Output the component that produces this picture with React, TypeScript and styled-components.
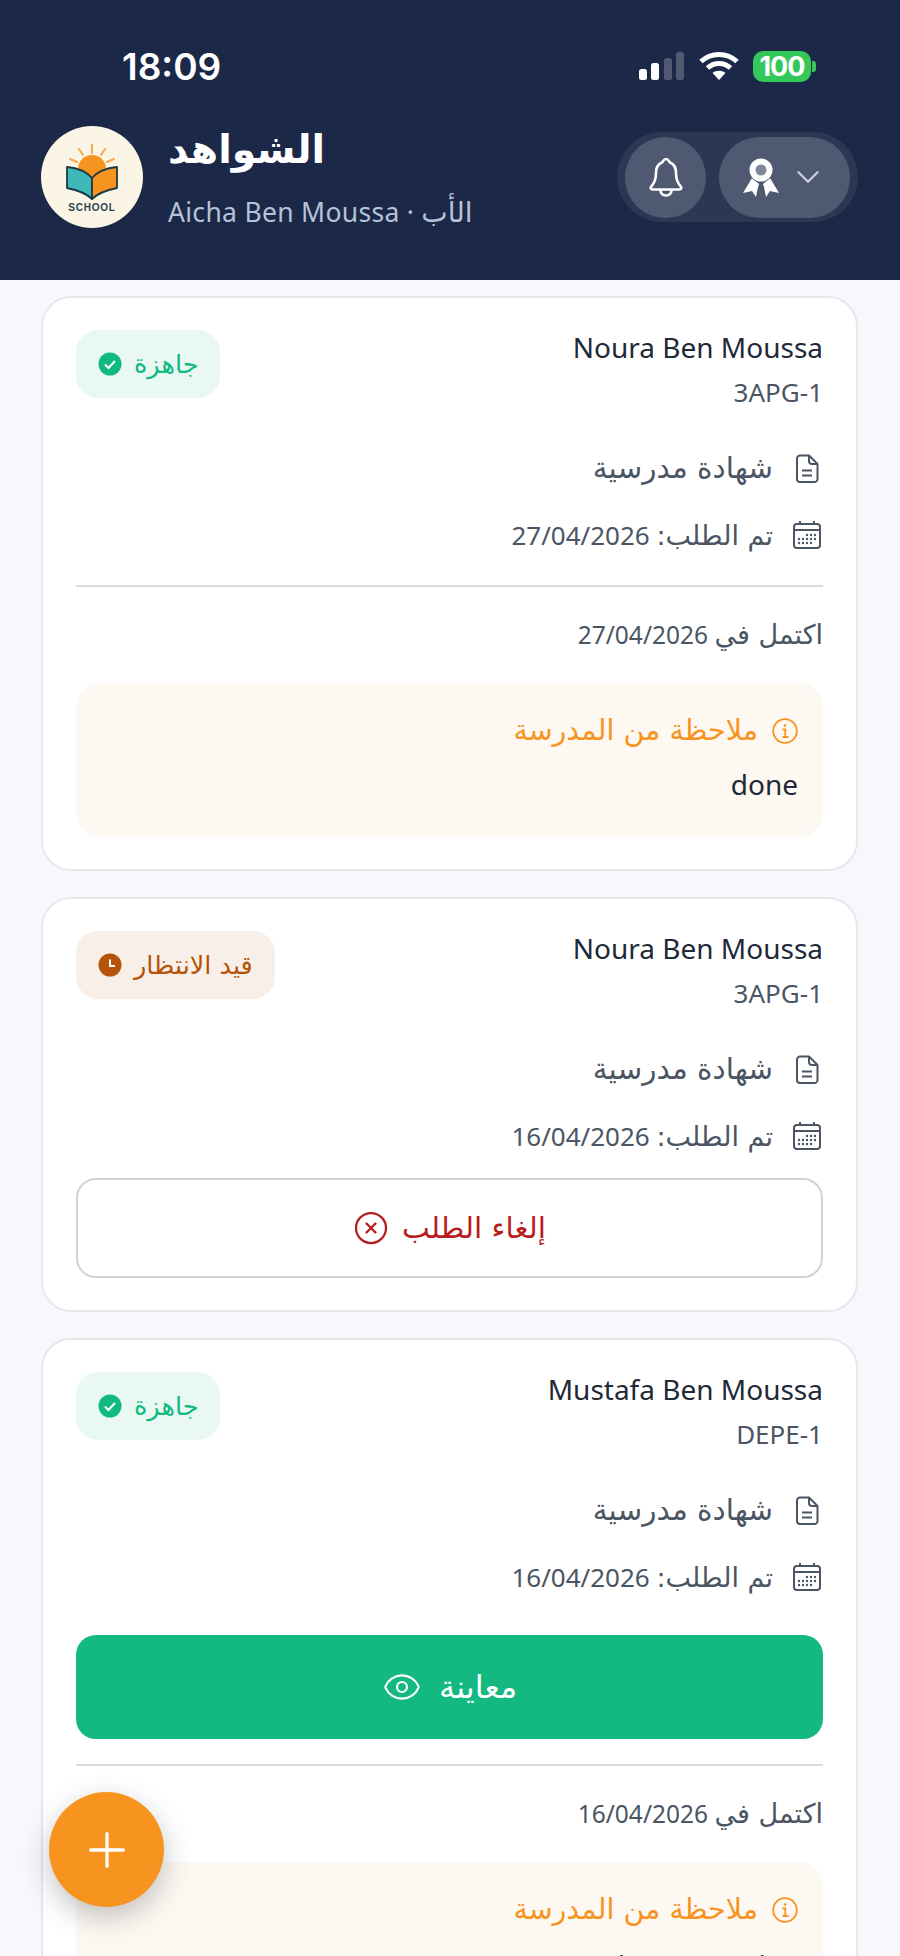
import React from "react";
import styled, {createGlobalStyle} from "styled-components";
import {ChevronDown, Eye, CircleX, Plus} from "lucide-react";

const GlobalStyle = createGlobalStyle`
  html, body {
    margin: 0;
    padding: 0;
    background: #f6f8fb;
    font-family: "Noto Sans", sans-serif;
  }
`;

const Page = styled.div`
  position: relative;
  width: 900px;
  height: 1956px;
  overflow: hidden;
  background: #f6f8fb;
`;

// arabic text uses dejavu, latin stays on noto
const Ar = styled.span<{$size?: number}>`
  font-family: "DejaVu Sans", sans-serif;
  font-size: ${p => (p.$size ? `${p.$size}px` : "inherit")};
`;

const Header = styled.header`
  height: 280px;
  box-sizing: border-box;
  background: #1b2847;
  padding: 44px 42px 0 41px;
`;

const StatusBar = styled.div`
  display: flex;
  align-items: center;
  justify-content: space-between;
  height: 44px;
  padding: 0 42px 0 81px;
`;

const Clock = styled.span`
  font-family: Inter, sans-serif;
  font-size: 37px;
  font-weight: 600;
  color: #fff;
`;

const StatusIcons = styled.div`
  display: flex;
  align-items: center;
  gap: 14px;
`;

const Battery = styled.span`
  display: flex;
  align-items: center;
  justify-content: center;
  width: 58px;
  height: 31px;
  border-radius: 10px;
  background: #34c759;
  color: #fff;
  font-family: Inter, sans-serif;
  font-size: 27px;
  font-weight: 700;
  letter-spacing: -1px;
`;

const BatteryCap = styled.span`
  width: 4px;
  height: 11px;
  margin-left: -13px;
  border-radius: 0 3px 3px 0;
  background: #34c759;
`;

const HeaderRow = styled.div`
  display: flex;
  align-items: center;
  justify-content: space-between;
  margin-top: 37px;
`;

const Brand = styled.div`
  display: flex;
  align-items: center;
  gap: 25px;
`;

const Logo = styled.div`
  width: 102px;
  height: 102px;
  border-radius: 50%;
  background: #fbf5e6;
`;

const BrandText = styled.div`
  display: flex;
  flex-direction: column;
  gap: 23px;
`;

const Title = styled.h1`
  margin: 0;
  font-family: "DejaVu Sans", sans-serif;
  font-size: 39.5px;
  line-height: 48px;
  font-weight: 700;
  color: #fff;
  text-align: left;
`;

const Subtitle = styled.div`
  font-size: 26.5px;
  line-height: 32px;
  letter-spacing: 0.3px;
  color: #b6c2d6;
`;

const ActionGroup = styled.div`
  display: flex;
  align-items: center;
  gap: 13px;
  height: 90px;
  box-sizing: border-box;
  padding: 4px 8px;
  border-radius: 45px;
  background: #2c3853;
`;

const RoundButton = styled.div`
  display: flex;
  align-items: center;
  justify-content: center;
  width: 81px;
  height: 81px;
  border-radius: 50%;
  background: #4f5a72;
  color: #fff;
`;

const MenuButton = styled.div`
  display: flex;
  align-items: center;
  justify-content: center;
  gap: 9px;
  width: 131px;
  height: 81px;
  border-radius: 41px;
  background: #4f5a72;
  color: #c8ced9;
`;

const List = styled.main`
  display: flex;
  flex-direction: column;
  gap: 26px;
  padding: 16px 42px 0 41px;
`;

const Card = styled.article`
  display: flex;
  flex-direction: column;
  padding: 32px 33px 32px;
  border: 2px solid #e6e8ee;
  border-radius: 30px;
  background: #fff;
  direction: rtl;
`;

const CardTop = styled.div`
  display: flex;
  justify-content: space-between;
  align-items: flex-start;
  margin-bottom: 43px;
`;

const Student = styled.div`
  display: flex;
  flex-direction: column;
  gap: 12px;
  direction: ltr;
  text-align: right;
`;

const StudentName = styled.div`
  font-size: 28px;
  line-height: 34px;
  font-weight: 400;
  color: #1f2937;
`;

const StudentClass = styled.div`
  font-size: 26px;
  line-height: 32px;
  color: #4b5563;
`;

const Badge = styled.div<{$tone: "ready" | "pending"}>`
  display: flex;
  align-items: center;
  gap: 12px;
  height: 68px;
  box-sizing: border-box;
  padding: 0 22px;
  border-radius: 22px;
  font-family: "DejaVu Sans", sans-serif;
  font-size: 25.5px;
  color: ${p => (p.$tone === "ready" ? "#10b981" : "#b45309")};
  background: ${p => (p.$tone === "ready" ? "#e9f8f3" : "#f8f0e8")};
`;

const InfoRow = styled.div`
  display: flex;
  align-items: center;
  gap: 18px;
  height: 34px;
  margin-bottom: 33px;
  font-size: 26px;
  color: #4b5563;
`;

const IconSlot = styled.span`
  display: flex;
  justify-content: center;
  width: 32px;
  color: #4b5563;
`;

const Divider = styled.hr`
  width: 100%;
  margin: 0 0 32px;
  border: 0;
  border-top: 2px solid #d9dbe0;
`;

const CompletedAt = styled.div`
  font-size: 24.5px;
  line-height: 32px;
  color: #4b5563;
`;

const Note = styled.section`
  margin-top: 32px;
  padding: 30px 25px 34px;
  border-radius: 24px;
  background: #fdf8f1;
`;

const NoteHead = styled.div`
  display: flex;
  align-items: center;
  gap: 14px;
  font-family: "DejaVu Sans", sans-serif;
  font-size: 28.5px;
  line-height: 36px;
  color: #f7931e;
`;

const NoteBody = styled.div`
  margin-top: 16px;
  font-size: 28px;
  line-height: 38px;
  color: #1f2937;
`;

const CancelButton = styled.button`
  display: flex;
  align-items: center;
  justify-content: center;
  gap: 13px;
  width: 100%;
  height: 100px;
  margin-top: -8px;
  border: 2px solid #cfd2d6;
  border-radius: 20px;
  background: #fff;
  color: #b91c1c;
  font-family: "DejaVu Sans", sans-serif;
  font-size: 29.5px;
`;

const PreviewButton = styled.button`
  display: flex;
  align-items: center;
  justify-content: center;
  gap: 17px;
  width: 100%;
  height: 104px;
  margin: 8px 0 25px;
  border: 0;
  border-radius: 20px;
  background: #13b981;
  color: #fff;
  font-family: "DejaVu Sans", sans-serif;
  font-size: 32px;
`;

const Fab = styled.button`
  position: absolute;
  left: 49px;
  top: 1792px;
  display: flex;
  align-items: center;
  justify-content: center;
  width: 115px;
  height: 115px;
  padding: 0;
  border: 0;
  border-radius: 50%;
  background: #f7941f;
  color: #fff;
  box-shadow: 0 10px 28px rgba(60, 60, 70, 0.3);
`;

const Signal = () => (
    <svg width="46" height="28" viewBox="0 0 46 28">
        <rect x="0" y="17" width="8" height="11" rx="2.500" fill="#fff"/>
        <rect x="12" y="11" width="8" height="17" rx="2.500" fill="#fff"/>
        <rect x="25" y="6" width="8" height="22" rx="2.500" fill="#4f5a72"/>
        <rect x="37" y="0" width="8" height="28" rx="2.500" fill="#4f5a72"/>
    </svg>
);

const Wifi = () => (
    <svg width="40" height="30" viewBox="0 0 40 30" fill="none" stroke="#fff" strokeWidth="5">
        <path d="M2 10.500C12 1 28 1 38 10.500"/>
        <path d="M8.500 17C15 11 25 11 31.500 17"/>
        <path d="M20 29l-6.500-7c3.500-3 9.500-3 13 0z" fill="#fff" stroke="none"/>
    </svg>
);

const BellIcon = () => (
    <svg width="36" height="40" viewBox="0 0 36 40" fill="none" stroke="#fff" strokeWidth="2.600" strokeLinejoin="round">
        <path d="M18 2c-2 0-3 2-4 3.500C9 7.500 8 11 8 16c0 7-2 10-5 14-.8 1.200 0 2.500 1.500 2.500h27c1.500 0 2.300-1.300 1.500-2.500-3-4-5-7-5-14 0-5-1-8.500-6-10.500C21 4 20 2 18 2z"/>
        <path d="M12.500 33c0 3.500 2.500 5.500 5.500 5.500s5.500-2 5.500-5.500"/>
    </svg>
);

const Medal = () => (
    <svg width="38" height="40" viewBox="0 0 38 40">
        <path d="M10 21l7 6-1 3-2 10-4-6-9 2z" fill="#fff"/>
        <path d="M28 21l-7 6 1 3 2 10 4-6 9 2z" fill="#fff"/>
        <circle cx="19" cy="13" r="12.500" fill="#4f5a72"/>
        <circle cx="19" cy="13" r="11.500" fill="#fff"/>
        <circle cx="19" cy="13" r="5.500" fill="#7f879b"/>
    </svg>
);

const SchoolLogo = () => (
    <svg width="102" height="102" viewBox="0 0 102 102">
        <g stroke="#f7a74a" strokeWidth="2" strokeLinecap="round">
            <path d="M51 19v8M38 23l4 6M64 23l-4 6M29 33l7 3M73 33l-7 3"/>
        </g>
        <circle cx="51" cy="43" r="14" fill="#f7941f"/>
        <path d="M26 41c10 1 19 4 25 11v21c-6-6-15-9-25-11z" fill="#3fb8b8" stroke="#1d3b45" strokeWidth="1.800" strokeLinejoin="round"/>
        <path d="M76 41c-10 1-19 4-25 11v21c6-6 15-9 25-11z" fill="#f7941f" stroke="#1d3b45" strokeWidth="1.800" strokeLinejoin="round"/>
        <text x="51" y="85" textAnchor="middle" fontFamily="Liberation Sans, sans-serif" fontWeight="700" fontSize="10" letterSpacing=".8" fill="#2c4450">SCHOOL</text>
    </svg>
);

const DocIcon = () => (
    <svg width="24" height="29" viewBox="0 0 24 29" fill="none" stroke="#4b5563" strokeWidth="2" strokeLinejoin="round">
        <path d="M5 1.500h9l8.500 8.500v15a3 3 0 0 1-3 3H5a3 3 0 0 1-3-3V4.500a3 3 0 0 1 3-3z"/>
        <path d="M14 1.500V7a3 3 0 0 0 3 3h5.500"/>
        <path d="M7 16.500h10M7 21.500h10"/>
    </svg>
);

const CalendarIcon = () => (
    <svg width="30" height="30" viewBox="0 0 30 30" fill="none" stroke="#4b5563" strokeWidth="2">
        <rect x="2" y="4" width="26" height="24" rx="3"/>
        <path d="M2 10h26M8 1v4M22 1v4"/>
        <g fill="#4b5563" stroke="none">
            <circle cx="15" cy="15" r="1.200"/><circle cx="19" cy="15" r="1.200"/><circle cx="23" cy="15" r="1.200"/>
            <circle cx="7" cy="19" r="1.200"/><circle cx="11" cy="19" r="1.200"/><circle cx="15" cy="19" r="1.200"/><circle cx="19" cy="19" r="1.200"/><circle cx="23" cy="19" r="1.200"/>
            <circle cx="7" cy="23" r="1.200"/><circle cx="11" cy="23" r="1.200"/><circle cx="15" cy="23" r="1.200"/><circle cx="19" cy="23" r="1.200"/>
        </g>
    </svg>
);

const ReadyIcon = () => (
    <svg width="24" height="24" viewBox="0 0 24 24">
        <circle cx="12" cy="12" r="11.500" fill="#10b981"/>
        <path d="M7 12.500l3.500 3.500L17 9" fill="none" stroke="#fff" strokeWidth="2"/>
    </svg>
);

const PendingIcon = () => (
    <svg width="24" height="24" viewBox="0 0 24 24">
        <circle cx="12" cy="12" r="11.500" fill="#b45309"/>
        <path d="M12 6.500V13h5" fill="none" stroke="#fff" strokeWidth="2"/>
    </svg>
);

const NoteInfoIcon = () => (
    <svg width="26" height="26" viewBox="0 0 26 26" fill="none" stroke="#f7931e" strokeWidth="1.800">
        <circle cx="13" cy="13" r="11.800"/>
        <path d="M10.500 11.500H13.300V19M10.500 19h6"/>
        <circle cx="13" cy="7.500" r="1.300" fill="#f7931e" stroke="none"/>
    </svg>
);

const StatusBadge = ({tone}: {tone: "ready" | "pending"}) => (
    <Badge $tone={tone}>
        <span>{tone === "ready" ? "جاهزة" : "قيد الانتظار"}</span>
        {tone === "ready" ? <ReadyIcon/> : <PendingIcon/>}
    </Badge>
);

const CardHead = ({name, group, tone, date}: {name: string; group: string; tone: "ready" | "pending"; date: string}) => (
    <>
        <CardTop>
            <Student>
                <StudentName>{name}</StudentName>
                <StudentClass>{group}</StudentClass>
            </Student>
            <StatusBadge tone={tone}/>
        </CardTop>
        <InfoRow>
            <IconSlot><DocIcon/></IconSlot>
            <Ar $size={29.5}>شهادة مدرسية</Ar>
        </InfoRow>
        <InfoRow>
            <IconSlot><CalendarIcon/></IconSlot>
            <span><Ar $size={27}>تم الطلب:</Ar> {date}</span>
        </InfoRow>
    </>
);

const SchoolNote = ({text, arabic}: {text: string; arabic?: boolean}) => (
    <Note>
        <NoteHead>
            <NoteInfoIcon/>
            <span>ملاحظة من المدرسة</span>
        </NoteHead>
        <NoteBody>{arabic ? <Ar $size={24.5}>{text}</Ar> : text}</NoteBody>
    </Note>
);

export default function App() {
    return (
        <Page>
            <GlobalStyle/>
            <Header>
                <StatusBar>
                    <Clock>18:09</Clock>
                    <StatusIcons>
                        <Signal/>
                        <Wifi/>
                        <Battery>100</Battery>
                        <BatteryCap/>
                    </StatusIcons>
                </StatusBar>
                <HeaderRow>
                    <Brand>
                        <Logo><SchoolLogo/></Logo>
                        <BrandText>
                            <Title>الشواهد</Title>
                            <Subtitle>Aicha Ben Moussa · <Ar $size={28}>الأب</Ar></Subtitle>
                        </BrandText>
                    </Brand>
                    <ActionGroup>
                        <RoundButton><BellIcon/></RoundButton>
                        <MenuButton>
                            <Medal/>
                            <ChevronDown size={38} strokeWidth={1.500}/>
                        </MenuButton>
                    </ActionGroup>
                </HeaderRow>
            </Header>
            <List>
                <Card>
                    <CardHead name="Noura Ben Moussa" group="3APG-1" tone="ready" date="27/04/2026"/>
                    <Divider/>
                    <CompletedAt><Ar $size={27}>اكتمل في</Ar> 27/04/2026</CompletedAt>
                    <SchoolNote text="done"/>
                </Card>
                <Card>
                    <CardHead name="Noura Ben Moussa" group="3APG-1" tone="pending" date="16/04/2026"/>
                    <CancelButton>
                        <span>إلغاء الطلب</span>
                        <CircleX size={36} strokeWidth={1.500}/>
                    </CancelButton>
                </Card>
                <Card>
                    <CardHead name="Mustafa Ben Moussa" group="DEPE-1" tone="ready" date="16/04/2026"/>
                    <PreviewButton>
                        <span>معاينة</span>
                        <Eye size={40} strokeWidth={1.300}/>
                    </PreviewButton>
                    <Divider/>
                    <CompletedAt><Ar $size={27}>اكتمل في</Ar> 16/04/2026</CompletedAt>
                    <SchoolNote text="شهادة مدرسية جاهزة" arabic/>
                </Card>
            </List>
            <Fab><Plus size={56} strokeWidth={1.400}/></Fab>
        </Page>
    );
}
